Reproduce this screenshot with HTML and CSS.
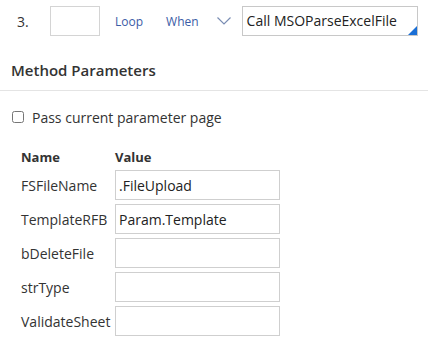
FILE: index.html
```html
<!DOCTYPE html>
<html lang="en">
<head>
    <meta charset="UTF-8">
    <meta name="viewport" content="width=device-width, initial-scale=1.0">
    <title>Method Parameters</title>
    <link rel="stylesheet" href="styles.css">
</head>
<body>
    <!-- Step row -->
    <div class="step-row">
        <span class="step-num">3.</span>
        <span class="step-label"></span>
        <a href="#" class="step-link link-loop">Loop</a>
        <a href="#" class="step-link link-when">When</a>
        <span class="chevron">
            <svg width="14" height="8" viewBox="0 0 14 8"><path d="M0.5 0.5 L7 7 L13.5 0.5" fill="none" stroke="#7a8db3" stroke-width="1.2"/></svg>
        </span>
        <div class="method-box">Call MSOParseExcelFile<span class="corner"></span></div>
    </div>

    <div class="section-title">Method Parameters</div>

    <div class="check-row">
        <input type="checkbox" id="pass-page">
        <label for="pass-page">Pass current parameter page</label>
    </div>

    <table class="params">
        <thead>
            <tr><th>Name</th><th>Value</th></tr>
        </thead>
        <tbody>
            <tr><td>FSFileName</td><td><input type="text" value=".FileUpload"></td></tr>
            <tr><td>TemplateRFB</td><td><input type="text" value="Param.Template"></td></tr>
            <tr><td>bDeleteFile</td><td><input type="text"></td></tr>
            <tr><td>strType</td><td><input type="text"></td></tr>
            <tr><td>ValidateSheet</td><td><input type="text"></td></tr>
        </tbody>
    </table>
</body>
</html>
```

FILE: styles.css
```css
body {
    font-family: "Open Sans", Arial, sans-serif;
    font-size: 13px;
    color: #333;
    background: #fff;
    margin: 0;
}

.step-row {
    display: flex;
    align-items: center;
    height: 30px;
    padding-top: 6px;
}

.step-num {
    margin-left: 17px;
    width: 33px;
    font-size: 14px;
}

.step-label {
    width: 50px;
    height: 30px;
    box-sizing: border-box;
    border: 1px solid #d4d4d4;
}

.step-link {
    color: #3b5ca6;
    text-decoration: none;
    font-size: 12px;
}

.link-loop {
    margin-left: 15px;
}

.link-when {
    margin-left: 23px;
}

.chevron {
    display: flex;
    margin-left: 18px;
}

.method-box {
    position: relative;
    margin-left: 11px;
    width: 176px;
    height: 30px;
    box-sizing: border-box;
    line-height: 28px;
    padding-left: 4px;
    border: 1px solid #c8c8c8;
    font-size: 14px;
    color: #222;
    white-space: nowrap;
}

/* little resize triangle in the corner */
.corner {
    position: absolute;
    right: 0;
    bottom: 0;
    width: 0;
    height: 0;
    border-left: 9px solid transparent;
    border-bottom: 9px solid #1a6fd6;
}

.section-title {
    margin-top: 24px;
    padding: 0 0 10px 11px;
    line-height: 20px;
    font-size: 15px;
    font-weight: 600;
    border-bottom: 1px solid #e4e4e4;
}

.check-row {
    display: flex;
    align-items: center;
    height: 20px;
    margin: 16px 0 0 11px;
    font-size: 14px;
}

.check-row input {
    margin: 0 8px 0 1px;
    width: 12px;
    height: 12px;
}

.params {
    border-collapse: collapse;
    margin: 20px 0 0 19px;
}

.params th {
    text-align: left;
    font-weight: bold;
    line-height: 20px;
    padding: 0 0 3px 2px;
}

.params td {
    padding: 0 0 4px 2px;
    font-size: 14px;
    vertical-align: middle;
}

.params td:first-child {
    width: 92px;
}

.params input {
    display: block;
    width: 165px;
    height: 30px;
    box-sizing: border-box;
    border: 1px solid #cfcfcf;
    padding: 0 3px;
    font-family: inherit;
    font-size: 14px;
    color: #222;
    margin: 0;
}
```
